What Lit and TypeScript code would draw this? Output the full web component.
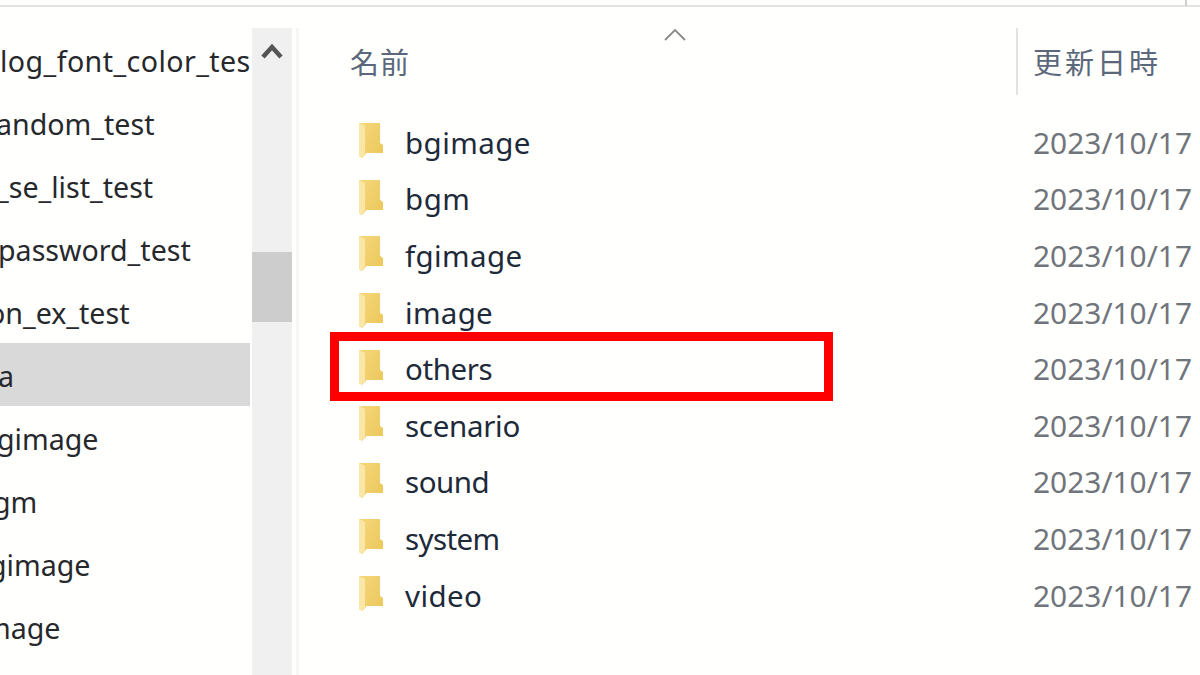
import { LitElement, html, css, svg } from "lit";
import { customElement } from "lit/decorators.js";

const tree: [string, number, number][] = [
  ["log_font_color_test", 0, 0.42],
  ["andom_test", -4, 0],
  ["_se_list_test", -4, 0],
  ["password_test", -2, 0],
  ["on_ex_test", -12, 0],
  ["a", -2, 0],
  ["gimage", -3, 0],
  ["gm", -7, 0],
  ["gimage", -11, 0],
  ["mage", -16, 0],
];
const files: [string, number][] = [
  ["bgimage", 0.45],
  ["bgm", 0.5],
  ["fgimage", 0.4],
  ["image", 0.3],
  ["others", -0.4],
  ["scenario", -0.3],
  ["sound", -0.5],
  ["system", -0.6],
  ["video", 0.4],
];

const folder = svg`<svg class="folder" viewBox="0 0 27 37" width="27" height="37">
  <defs>
    <linearGradient id="fg" x1="0" y1="0" x2="1" y2="0.7">
      <stop offset="0" stop-color="#f5d77c"/><stop offset="1" stop-color="#edc95e"/>
    </linearGradient>
  </defs>
  <path d="M1 1H22V21L25 23V31H8V32L4 36L1 34Z" fill="url(#fg)"/>
  <path d="M1 1L7 4V32L4 36L1 34Z" fill="#fae6a6"/>
</svg>`;

@customElement("app-root")
export class AppRoot extends LitElement {
  static styles = css`
    :host { display: block; width: 1200px; height: 675px; overflow: hidden; background: #fffffe; position: relative; font-family: "Noto Sans", "Noto Sans CJK JP", sans-serif; }
    .top { height: 5px; border-bottom: 2px solid #e3e3e3; box-sizing: content-box; }
    .tick { position: absolute; left: 1185px; top: 0; width: 2px; height: 6px; background: #cfcfcf; }
    .main { display: flex; height: 668px; }
    .side { width: 250px; padding-top: 21px; flex: none; overflow: hidden; }
    .srow { height: 63px; display: flex; align-items: center; padding-top: 1px; box-sizing: border-box; font-size: 28.6px; color: #26282c; white-space: nowrap; overflow: hidden; }
    .srow.sel { background: #d9d9d9; }
    .bar { width: 40px; margin: 21px 0 0 2px; background: #f0f0f0; flex: none; display: flex; flex-direction: column; align-items: center; }
    .up { margin-top: 14px; height: 210px; flex: none; }
    .thumb { align-self: stretch; height: 70px; background: #cdcdcd; }
    .rule { width: 3px; margin: 21px 0 0 4px; background: #f6f6f4; flex: none; }
    .list { flex: 1; min-width: 0; padding-top: 21px; position: relative; background: #fffffd; }
    .head { height: 67px; display: flex; font-size: 29px; color: #5b687b; }
    .hname { width: 717px; padding: 13px 0 0 51px; box-sizing: border-box; letter-spacing: 1px; flex: none; line-height: 44px; }
    .hdate { border-left: 2px solid #e2e2e2; padding: 13px 0 0 15px; line-height: 44px; letter-spacing: 3px; white-space: nowrap; }
    .sort { position: absolute; left: 365px; top: 20px; }
    .rows { padding-top: 19px; }
    .frow { height: 56.6px; display: flex; align-items: center; }
    .fcell { width: 734px; padding-left: 59px; box-sizing: border-box; display: flex; align-items: center; flex: none; }
    .folder { margin-top: -3px; flex: none; }
    .fname { margin-left: 20px; font-size: 29.5px; color: #1e2a3a; }
    .fdate { font-size: 29.9px; color: #70757c; white-space: nowrap; }
    .mark { position: absolute; left: 330px; top: 332px; width: 503px; height: 69px; border: 9px solid #ff0000; box-sizing: border-box; }
  `;

  render() {
    return html`
      <div class="top"></div>
      <div class="tick"></div>
      <div class="main">
        <div class="side">
          ${tree.map(([t, off, sp], i) => html`<div class="srow ${i === 5 ? "sel" : ""}"><span style="margin-left:${off}px;letter-spacing:${sp}px">${t}</span></div>`)}
        </div>
        <div class="bar">
          <div class="up">
            <svg width="22" height="16" viewBox="0 0 22 16"><path d="M2 14L11 4L20 14" fill="none" stroke="#555" stroke-width="4.5"/></svg>
          </div>
          <div class="thumb"></div>
        </div>
        <div class="rule"></div>
        <div class="list">
          <svg class="sort" width="22" height="14" viewBox="0 0 22 14"><path d="M1 13L11 3L21 13" fill="none" stroke="#8a8a8a" stroke-width="1.8"/></svg>
          <div class="head"><div class="hname">名前</div><div class="hdate">更新日時</div></div>
          <div class="rows">
            ${files.map(([f, sp]) => html`<div class="frow"><div class="fcell">${folder}<span class="fname" style="letter-spacing:${sp}px">${f}</span></div><span class="fdate">2023/10/17</span></div>`)}
          </div>
        </div>
      </div>
      <div class="mark"></div>
    `;
  }
}
